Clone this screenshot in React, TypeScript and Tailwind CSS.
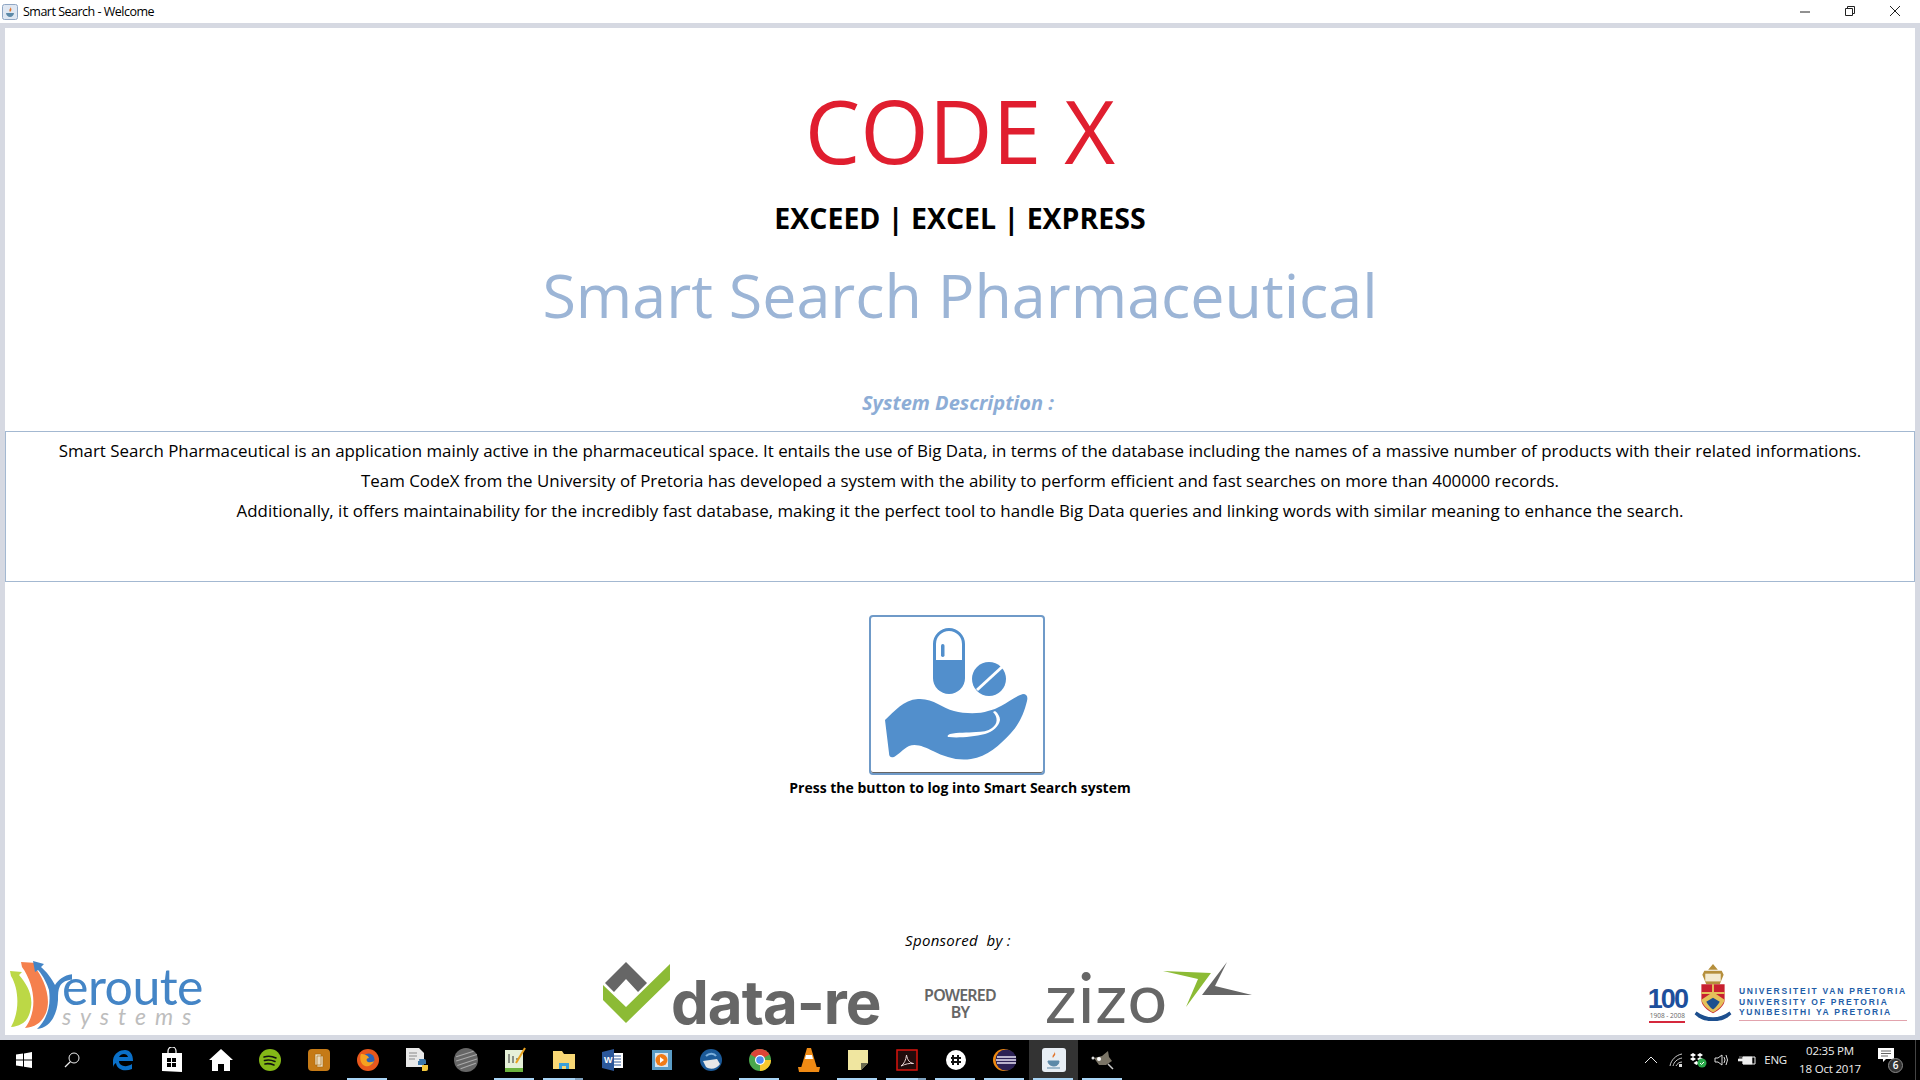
import React from "react";

const FONT = "font-['Open_Sans','Noto_Sans',sans-serif]";

const PillIcon = () => (
  <svg viewBox="0 0 172 156" className="h-full w-full">
    {/* capsule */}
    <path d="M63.500 44V27a14.500 14.500 0 0 1 29 0v17" fill="none" stroke="#528fcc" strokeWidth="3" />
    <path d="M62 43h32v18a16 16 0 0 1-32 0z" fill="#528fcc" />
    <rect x="70" y="27" width="3.500" height="13" rx="1.700" fill="#528fcc" />
    {/* tablet */}
    <circle cx="118" cy="62" r="17" fill="#528fcc" />
    <path d="M106 73 131 50" stroke="#fff" strokeWidth="3" />
    {/* hand */}
    <path d="M14 103C24 94 32 83 47 82c15-1 24 9 36 12 11 3 26 3 34 0 5-1 9-3 13-5 8-4 15-10 22-12 4 0 5 3 4 7-3 12-7 22-16 32-11 12-24 24-40 26-14 2-26-2-38-8-8-4-17-8-24-5-6 3-11 9-15 11-3 1-5 0-5-4z" fill="#528fcc" />
    {/* thumb line */}
    <path d="M122 95c5 5 5 12-1 16-4 3-10 4-16 4-9 1-18 0-26 2-3 1-3 3-1 3 8 1 24 0 36-3 8-2 14-8 15-14 0-3-2-7-5-9z" fill="#fff" />
  </svg>
);

const DataReMark = () => (
  <svg viewBox="0 0 68 62" className="h-[62px] w-[68px]">
    <path d="M23 0 44 21 35 30 23 17 11 30 2 21z" fill="#666" />
    <path d="M0 23 23 45 67 2V18L23 61 0 38z" fill="#8cbb35" />
  </svg>
);

const ZizoMark = () => (
  <svg viewBox="0 0 90 46" className="h-[46px] w-[90px]">
    <path d="M0 9 48 11 23 45 35 17z" fill="#8cbb35" />
    <path d="M64 0 39 33H89L52 24z" fill="#666" />
  </svg>
);

const YerouteMark = () => (
  <svg viewBox="0 0 66 70" className="h-[70px] w-[66px]">
    <path d="M5 15C13 28 14 50 5 66c10-1 18-5 20-20 2-13-5-24-12-32l3-3-12-1z" fill="#bcd846" />
    <path d="M16 6c13 18 16 44 3 61 11-1 17-6 21-15 6-16-3-36-12-47l3-3-16-1z" fill="#f5804d" />
    <path d="M27 0l2 11 3-2c6 7 9 14 11 20 2 15-1 28-12 39 13-1 20-14 21-29 0-6 0-10 2-14 3-5 9-7 15-6V13c-10 0-16 5-20 11-3-6-9-14-14-18l3-3z" fill="#4485c6" />
  </svg>
);

const Crest = () => (
  <svg viewBox="0 0 38 62" className="h-[60px] w-[38px]">
    <path d="M19 0l5 6h-10zM10 7h18l2 4-4 10h-14l-4-10z" fill="#b58f3c" />
    <path d="M11 10h16v8H11z" fill="#f3ead0" />
    <path d="M7 21h24v16c0 6-6 11-12 14-6-3-12-8-12-14z" fill="#c8202f" />
    <path d="M18 21h2v14h-2zM7 29h24v2H7z" fill="#e4c15a" />
    <path d="M7 37l12-8 12 8c-1 5-6 10-12 13-6-3-11-8-12-13z" fill="#e4c15a" />
    <path d="M12 39l7-4 7 4c-2 3-4 6-7 8-3-2-5-5-7-8z" fill="#1d4f8f" />
    <path d="M0 52c6 6 12 7 19 7s13-1 19-7l-2-3c-5 4-11 6-17 6s-12-2-17-6z" fill="#1d4f8f" />
  </svg>
);

const TrayIcons = () => (
  <div className="flex items-center">
    <svg viewBox="0 0 14 8" className="ml-[8px] h-[8px] w-[14px]"><path d="M1 7 7 1l6 6" fill="none" stroke="#eee" /></svg>
    <svg viewBox="0 0 14 14" className="ml-[11px] h-[14px] w-[14px]"><path d="M1 13C2 7 7 2 13 1M4 13c1-4 4-7 9-8M7 13c1-2 3-4 6-4" fill="none" stroke="#ccc" /><rect x="10" y="11" width="3" height="3" fill="#ddd" /></svg>
    <svg viewBox="0 0 18 16" className="ml-[6px] h-[16px] w-[18px]"><path d="M1 3l3-2 3 2-3 2zM8 3l3-2 3 2-3 2zM1 7l3-2 3 2-3 2zM8 7l3-2 3 2-3 2zM4.500 11l3-2 3 2-3 2z" fill="#fff" /><circle cx="13" cy="11" r="4.500" fill="#2aa84a" /><path d="M11 11l1.500 1.500L15 10" stroke="#fff" fill="none" /></svg>
    <svg viewBox="0 0 16 14" className="ml-[7px] h-[14px] w-[16px]"><path d="M1 5h3l4-3v10L4 9H1zM10 4q2 3 0 6M12 2q3 5 0 10" fill="none" stroke="#ddd" /></svg>
    <svg viewBox="0 0 18 12" className="ml-[8px] h-[12px] w-[18px]"><path d="M5 3h12v7H5z" fill="none" stroke="#eee" /><path d="M5 3h9v7H5zM0 5h5v2H0zM2 2v3M4 2v3" fill="#eee" stroke="#eee" strokeWidth=".6" /></svg>
  </div>
);

const TASK_ICONS: { x: string; el: React.ReactNode; under?: boolean; active?: boolean; stack?: boolean }[] = [
  { x: "edge", el: <svg viewBox="0 0 22 22" className="h-[22px] w-[22px]"><path d="M1 11C2 4 8 1 13 1c5 0 8 4 8 11H7c0 5 7 7 13 3v5c-7 3-15 1-16-6-2 1-3 3-3 5z M7 8h9c-1-4-7-4-9 0z" fill="#0a70c9" fillRule="evenodd" /></svg> },
  { x: "store", el: <svg viewBox="0 0 22 26" className="h-[26px] w-[22px]"><path d="M7 6V4a4 4 0 0 1 8 0v2" fill="none" stroke="#fff" strokeWidth="1.200" /><path d="M1 6h20v19l-20-1z" fill="#fff" /><path d="M6 11h4v4H6zM11 11h4v4h-4zM6 16h4v4H6zM11 16h4v4h-4z" fill="#000" /></svg> },
  { x: "home", el: <svg viewBox="0 0 24 22" className="h-[22px] w-[24px]"><path d="M12 0 24 11h-3v11h-6v-7H9v7H3V11H0z" fill="#fff" /></svg> },
  { x: "spotify", el: <svg viewBox="0 0 22 22" className="h-[22px] w-[22px]"><circle cx="11" cy="11" r="11" fill="#84b817" /><path d="M5 8q6-2 12 1M5.500 11.500q5-1.500 10.500 1M6 15q4-1 9 1" fill="none" stroke="#111" strokeWidth="1.600" strokeLinecap="round" /></svg> },
  { x: "box", el: <svg viewBox="0 0 22 22" className="h-[22px] w-[22px]"><rect width="22" height="22" rx="4" fill="#c57a16" /><path d="M7 5h6v11H7zM9 7h6v11H9z" fill="#e9dcc0" stroke="#a7680f" strokeWidth=".6" /></svg> },
  { x: "firefox", under: true, el: <svg viewBox="0 0 22 22" className="h-[22px] w-[22px]"><circle cx="11" cy="11" r="11" fill="#e8581c" /><circle cx="11.500" cy="10.500" r="6" fill="#2b63b8" /><path d="M4 5c3 0 7 1 8 4-3 0-3 3-1 4 3 1 6-1 6-1-1 4-6 6-9 5C4 16 2 9 4 5z" fill="#f6a21f" /></svg> },
  { x: "python", el: <svg viewBox="0 0 24 26" className="h-[26px] w-[24px]"><path d="M1 1h13l5 5v14H1z" fill="#e8e8e8" /><path d="M4 6h8M4 9h8M4 12h6" stroke="#888" /><path d="M13 14h6v4h-6z" fill="#3b76a8" /><path d="M14 12h5a2 2 0 0 1 2 2v3h-6z" fill="#3b76a8" /><path d="M17 18h6v4a2 2 0 0 1-2 2h-4z" fill="#f2c73d" /></svg> },
  { x: "sphere", el: <svg viewBox="0 0 22 22" className="h-[24px] w-[24px]"><circle cx="11" cy="11" r="11" fill="#666" /><path d="M2 8 18 3M2 12 21 6M3 16 21 10M6 19 20 14" stroke="#aaa" /></svg> },
  { x: "notepad", under: true, el: <svg viewBox="0 0 22 26" className="h-[26px] w-[22px]"><path d="M1 3h18v22H1z" fill="#e6f0d8" /><path d="M1 21h18v4H1z" fill="#6cb33f" /><path d="M5 7v9M9 9v7M12 12h3" stroke="#333" /><path d="M12 16 21 1" stroke="#e8a21f" strokeWidth="2" /></svg> },
  { x: "folder", under: true, stack: true, el: <svg viewBox="0 0 24 20" className="h-[20px] w-[24px]"><path d="M1 1h9l2 3h11v15H1z" fill="#f8d775" /><path d="M7 19v-6h10v6h-3v-3h-4v3z" fill="#3aa0dc" /></svg> },
  { x: "word", el: <svg viewBox="0 0 22 22" className="h-[24px] w-[22px]"><path d="M8 4h13v15H8z" fill="#fff" /><path d="M11 7h8M11 10h8M11 13h8M11 16h8" stroke="#2b579a" /><path d="M0 3 12 0v22L0 19z" fill="#2b579a" /><text x="2" y="14" fontSize="9" fontWeight="700" fill="#fff" fontFamily="Liberation Sans, sans-serif">W</text></svg> },
  { x: "wmp", el: <svg viewBox="0 0 20 22" className="h-[22px] w-[20px]"><path d="M0 1h20v20H0z" fill="#5a9cc6" /><path d="M3 4h13v14H3z" fill="#d9e6ef" /><circle cx="9.500" cy="11" r="6" fill="#f07b16" /><path d="M8 8v6l4-3z" fill="#fff" /></svg> },
  { x: "thunderbird", el: <svg viewBox="0 0 24 24" className="h-[24px] w-[24px]"><circle cx="12" cy="12" r="11" fill="#1b5a99" /><path d="M4 13 18 11l3 5c-3 5-10 6-14 3z" fill="#e7e7e7" /><path d="M7 8c3-3 8-3 10 0" stroke="#7fb2de" strokeWidth="2" fill="none" /></svg> },
  { x: "chrome", under: true, el: <svg viewBox="0 0 22 22" className="h-[22px] w-[22px]"><circle cx="11" cy="11" r="11" fill="#4aa64c" /><path d="M11 11 1.500 5.500A11 11 0 0 1 20.500 5.500z" fill="#dc4437" /><path d="M11 11h11A11 11 0 0 1 11 22z" fill="#f8c72e" /><circle cx="11" cy="11" r="5" fill="#fff" /><circle cx="11" cy="11" r="3.800" fill="#4a89f0" /></svg> },
  { x: "vlc", el: <svg viewBox="0 0 22 24" className="h-[24px] w-[22px]"><path d="M9 0h4l6 20H3z" fill="#ef8a14" /><path d="M8 7h6l1 4H7z" fill="#fff" /><path d="M0 19h22l-1 5H1z" fill="#ef8a14" /></svg> },
  { x: "note", under: true, el: <svg viewBox="0 0 20 20" className="h-[20px] w-[20px]"><path d="M0 0h20v13l-7 7H0z" fill="#f0e6a0" /><path d="M20 13h-7v7z" fill="#6b6b50" /></svg> },
  { x: "acrobat", under: true, stack: true, el: <svg viewBox="0 0 22 22" className="h-[22px] w-[22px]"><rect x="1" y="1" width="20" height="20" fill="#210b0b" stroke="#d9140e" strokeWidth="1.500" /><path d="M5 17c3-2 5-6 5.500-11 1 5 3 8 7 8.500-4-.500-8 .500-12.500 2.500z" fill="none" stroke="#e9d5d5" /></svg> },
  { x: "hash", under: true, el: <svg viewBox="0 0 20 20" className="h-[20px] w-[20px]"><circle cx="10" cy="10" r="10" fill="#fff" /><path d="M7 5v10M12 5v10M5 8h10M5 12h10" stroke="#111" strokeWidth="2" /></svg> },
  { x: "eclipse", under: true, el: <svg viewBox="0 0 24 24" className="h-[24px] w-[24px]"><circle cx="11" cy="12" r="11" fill="#f08a10" /><circle cx="13" cy="12" r="10.500" fill="#2c2255" /><path d="M4 9h19M3 12h20M4 15h19" stroke="#e8e4f4" strokeWidth="1.500" /></svg> },
  { x: "java", under: true, active: true, el: <svg viewBox="0 0 24 24" className="h-[24px] w-[24px]"><rect width="24" height="24" rx="3" fill="#e8eef4" /><path d="M12 3c2 3-3 4-1 7 1-2 3-3 2-5z" fill="#e2752d" /><path d="M6 13h11c0 3-2 5-5 5s-6-2-6-5zM5 20h13" fill="#5c89a8" stroke="#5c89a8" /></svg> },
  { x: "gimp", under: true, el: <svg viewBox="0 0 24 20" className="h-[20px] w-[24px]"><path d="M3 8l8-2 6-5 1 6 3 4-6 4-7 0z" fill="#7a7466" /><circle cx="8" cy="9" r="2" fill="#fff" /><path d="M17 14l5 5" stroke="#ccc" strokeWidth="1.500" /><circle cx="2" cy="8" r="1.500" fill="#ddd" /></svg> },
];

export default function App() {
  return (
    <div className={`flex h-[1080px] w-[1920px] flex-col overflow-hidden bg-[#d6d9e2] ${FONT}`}>
      {/* title bar */}
      <div className="flex h-[23px] items-center bg-white text-[12.500px] text-black">
        <svg viewBox="0 0 16 16" className="ml-[2px] h-[16px] w-[16px]">
          <rect x=".5" y=".5" width="15" height="15" rx="2" fill="#dfe7f2" stroke="#8fa6c4" />
          <path d="M8 2c2 2-2 3 0 6 1-1 2-2 1-4z" fill="#e2752d" />
          <path d="M4 9h8c0 2-2 4-4 4s-4-2-4-4z" fill="#5c89a8" />
        </svg>
        <span className="ml-[5px] pt-[1px] tracking-[-0.5px]">Smart Search - Welcome</span>
        <div className="ml-auto mb-[2px] flex items-center">
          <svg viewBox="0 0 12 12" className="h-[12px] w-[12px]"><path d="M1 7h10" stroke="#222" /></svg>
          <svg viewBox="0 0 12 12" className="ml-[33px] h-[12px] w-[12px]"><path d="M1.500 3.500h7v7h-7zM3.500 3.500v-2h7v7h-2" fill="none" stroke="#222" /></svg>
          <svg viewBox="0 0 12 12" className="ml-[33px] mr-[19px] h-[12px] w-[12px]"><path d="M1 1l10 10M11 1 1 11" stroke="#222" /></svg>
        </div>
      </div>

      {/* window body */}
      <div className="mx-[5px] mt-[5px] flex h-[1007px] flex-col items-center bg-white">
        <h1 className="mt-[47px] text-[88px] leading-[110px] text-[#e01e2f]">CODE X</h1>
        <h2 className="mt-[13px] text-[28.500px] font-bold leading-[40px] text-black">EXCEED | EXCEL | EXPRESS</h2>
        <h3 className="mt-[12px] text-[61px] leading-[90px] text-[#9cb5d6]">Smart Search Pharmaceutical</h3>
        <p className="mr-[4px] mt-[48px] text-[20px] font-bold italic leading-[30px] text-[#8dadd6]">System Description :</p>

        <div className="mt-[13px] h-[151px] w-full border border-[#a3b8d1] pt-[4px] text-center text-[16.900px] leading-[30px] text-black">
          <p>Smart Search Pharmaceutical is an application mainly active in the pharmaceutical space. It entails the use of Big Data, in terms of the database including the names of a massive number of products with their related informations.</p>
          <p>Team CodeX from the University of Pretoria has developed a system with the ability to perform efficient and fast searches on more than 400000 records.</p>
          <p>Additionally, it offers maintainability for the incredibly fast database, making it the perfect tool to handle Big Data queries and linking words with similar meaning to enhance the search.</p>
        </div>

        <button className="mr-[6px] mt-[33px] h-[160px] w-[176px] rounded-[4px] border-2 border-[#6f9ac8] bg-white shadow-[inset_0_-1px_0_#666]">
          <PillIcon />
        </button>
        <p className="mt-[3px] text-[14px] font-bold leading-[20px] text-black">Press the button to log into Smart Search system</p>

        <div className="mt-auto w-full">
          <p className="mr-[4px] text-center text-[15px] italic leading-[20px] tracking-[0.3px] text-black">Sponsored&nbsp; by :</p>
          {/* sponsor logos */}
          <div className="flex h-[85px] items-start text-[#666]">
            <div className="ml-[1px] mt-[11px] flex w-[217px]">
              <YerouteMark />
              <div className="-ml-[10px] flex flex-col">
                <span className="h-[43px] pt-[2px] text-[50px] leading-[46px] tracking-[-0.5px] text-[#4485c6] font-['Lato',sans-serif]">eroute</span>
                <span className="pt-[2px] text-[23px] italic leading-[20px] tracking-[9px] text-[#bdbdbd] font-['Lato',sans-serif]">systems</span>
              </div>
            </div>
            <div className="ml-[380px] mt-[12px] flex w-[285px] items-end">
              <DataReMark />
              <span className="-mb-[10px] font-['Inter',sans-serif] text-[60px] font-bold leading-[64px] tracking-[-1px]">data-re</span>
            </div>
            <div className="ml-[32px] mt-[37px] w-[80px] text-center font-['Noto_Sans',sans-serif] text-[16px] font-semibold leading-[17px] tracking-[-0.8px]">POWERED<br />BY</div>
            <div className="ml-[45px] flex w-[215px] items-start">
              <span className="mt-[8px] w-[118px] font-['Lato',sans-serif] text-[70px] leading-[76px] tracking-[1px]">zizo</span>
              <div className="mt-[12px]"><ZizoMark /></div>
            </div>
            <div className="ml-auto mr-[8px] mt-[14px] flex items-start">
              <div className="flex w-[39px] flex-col items-center pt-[24px]">
                <span className="font-['Liberation_Sans',sans-serif] text-[27px] font-bold leading-[23px] tracking-[-2px] text-[#1d4f9c]">100</span>
                <span className="w-[36px] whitespace-nowrap border-b-2 border-[#d5283c] text-center text-[6.500px] leading-[10px] text-[#666]">1908 - 2008</span>
              </div>
              <div className="ml-[7px]"><Crest /></div>
              <div className="ml-[7px] mt-[22px] border-b border-[#e2a3ad] pb-[2px] font-['Liberation_Sans',sans-serif] text-[8.500px] font-bold leading-[10.500px] tracking-[1.750px] text-[#1f5ea8]">
                <div>UNIVERSITEIT VAN PRETORIA</div>
                <div>UNIVERSITY OF PRETORIA</div>
                <div>YUNIBESITHI YA PRETORIA</div>
              </div>
            </div>
          </div>
        </div>
      </div>

      {/* taskbar */}
      <div className="mt-[5px] flex h-[40px] items-stretch bg-black text-white">
        <div className="flex w-[48px] items-center justify-center">
          <svg viewBox="0 0 16 16" className="h-[16px] w-[16px]"><path d="M0 2.500 7 1.500V7.500H0zM8 1.400 16 0V7.500H8zM0 8.500H7V14.500L0 13.500zM8 8.500H16V16L8 14.700z" fill="#fff" /></svg>
        </div>
        <div className="flex w-[50px] items-center justify-center pr-[2px]">
          <svg viewBox="0 0 16 16" className="h-[16px] w-[16px]"><circle cx="10" cy="6" r="5" fill="none" stroke="#eee" /><path d="M6.500 9.500 1 15" stroke="#eee" strokeWidth="1.200" /></svg>
        </div>
        {TASK_ICONS.map((i) => (
          <div key={i.x} className={`relative flex w-[49px] items-center justify-center ${i.active ? "bg-[#333]" : ""}`}>
            {i.el}
            {i.under && <div className="absolute bottom-0 left-[4px] right-[5px] h-[2px] bg-[#a8d4f5]" />}
            {i.stack && <div className="absolute bottom-0 right-[5px] h-[2px] w-[8px] bg-[#7fa3c0]" />}
          </div>
        ))}
        <div className="ml-auto flex items-center">
          <TrayIcons />
          <span className="ml-[8px] text-[11.500px] tracking-[-0.2px] text-[#eee]">ENG</span>
          <div className="ml-[11px] w-[64px] text-center text-[11.500px] leading-[18px] tracking-[-0.2px] text-[#eee]">
            <div>02:35 PM</div>
            <div>18 Oct 2017</div>
          </div>
          <div className="relative ml-[16px] mr-[11px] h-[26px] w-[26px]">
            <svg viewBox="0 0 16 14" className="absolute left-0 top-[1px] h-[14px] w-[16px]"><path d="M0 0h16v11H8l-3 3v-3H0z" fill="#fff" /><path d="M3 3h10M3 5.500h10M3 8h7" stroke="#666" /></svg>
            <span className="absolute bottom-0 right-[1px] flex h-[15px] w-[15px] items-center justify-center rounded-full border border-[#888] bg-[#333] text-[10px] font-semibold text-white">6</span>
          </div>
          <div className="h-[40px] w-[1px] bg-[#444]" />
          <div className="w-[4px]" />
        </div>
      </div>
    </div>
  );
}
